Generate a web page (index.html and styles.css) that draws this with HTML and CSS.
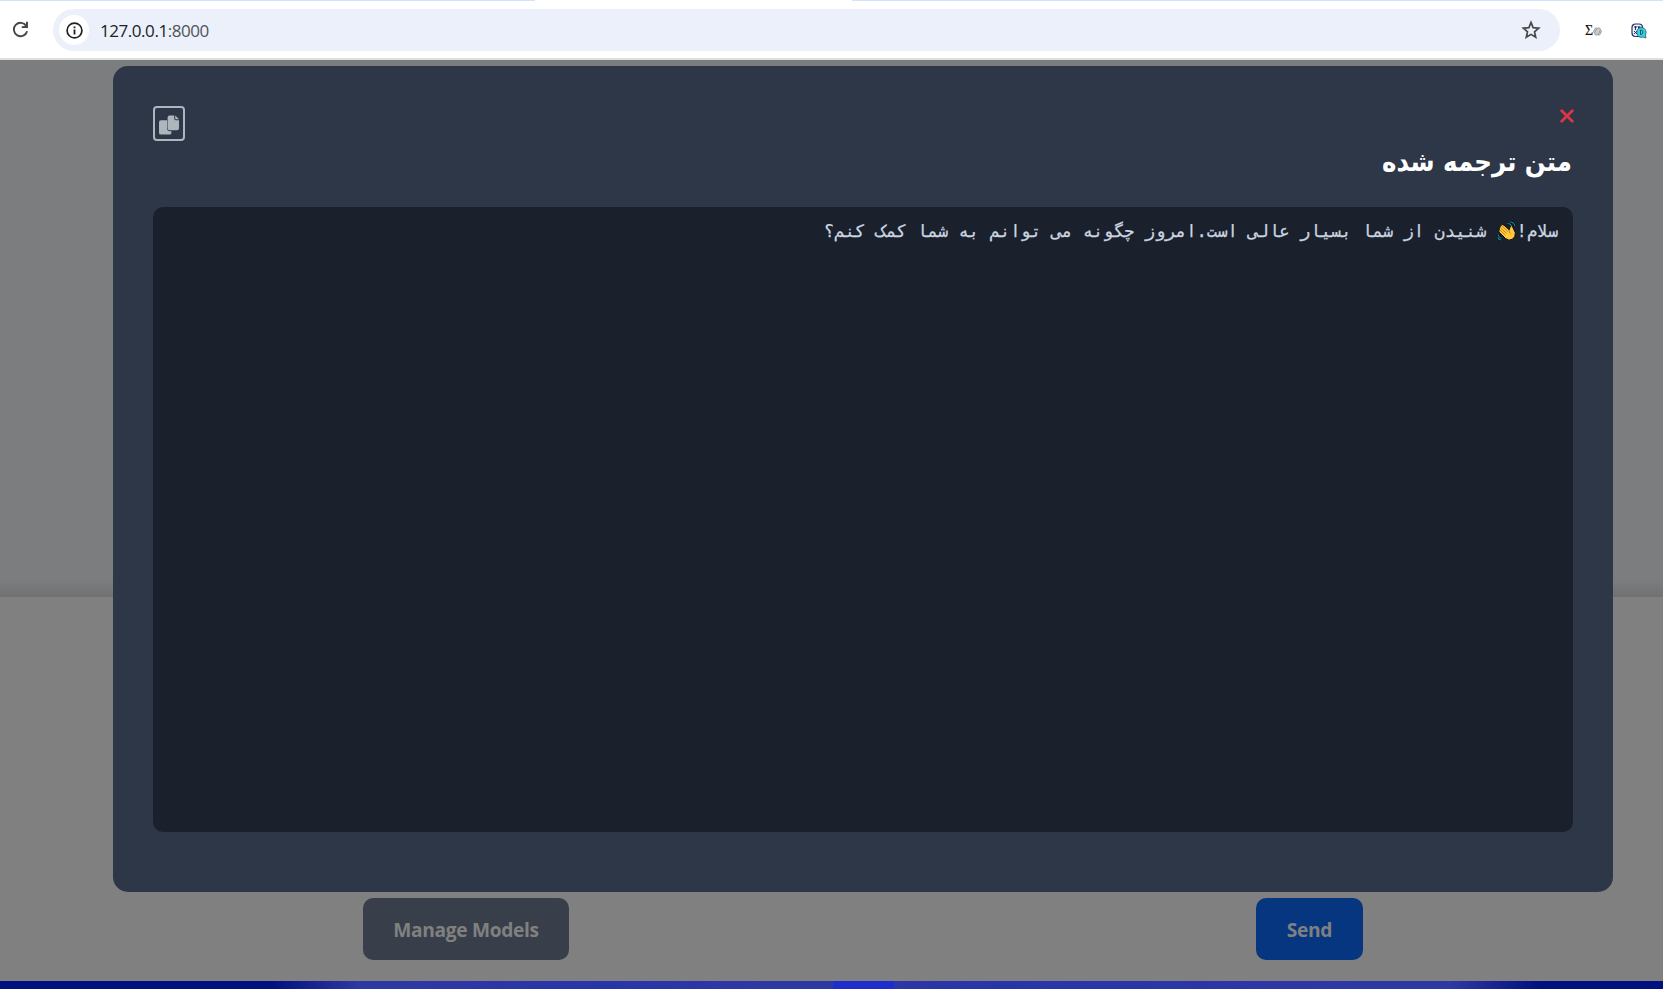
FILE: index.html
```html
<!DOCTYPE html>
<html lang="en">
<head>
<meta charset="utf-8">
<title>Translated text</title>
<link rel="stylesheet" href="styles.css">
</head>
<body>
<header class="toolbar">
  <div class="tab-edge"><span class="active-tab"></span></div>
  <div class="toolbar-row">
    <svg class="reload" viewBox="0 0 16 16"><path d="M13.4 4.6A6.3 6.3 0 1 0 14.2 9.600" fill="none" stroke="#474747" stroke-width="1.800"/><path d="M15 .8V6.600H9.200V5L13 4.600 13.200.8z" fill="#474747"/></svg>
    <div class="address">
      <span class="site-info"><svg viewBox="0 0 17 17"><circle cx="8.500" cy="8.500" r="7.400" fill="none" stroke="#202124" stroke-width="1.700"/><path d="M7.600 4.500h1.800v1.700H7.600zM7.600 7.500h1.800v5H7.600z" fill="#202124"/></svg></span>
      <span class="url">127.0.0.1<span class="port">:8000</span></span>
      <svg class="star" viewBox="0 0 20 20"><path d="M10 2.400l2.100 5.200 5.600.5-4.200 3.700 1.200 5.500L10 14.400l-4.700 2.900 1.200-5.500-4.200-3.700 5.600-.5z" fill="none" stroke="#474747" stroke-width="1.700"/></svg>
    </div>
    <div class="extensions">
      <span class="sigma">Σ<svg viewBox="0 0 8 8"><g fill="#ccc" stroke="#888" stroke-width=".5"><ellipse cx="4" cy="4" rx="3.700" ry="1.800"/><ellipse cx="4" cy="4" rx="3.700" ry="1.800" transform="rotate(60 4 4)"/><ellipse cx="4" cy="4" rx="3.700" ry="1.800" transform="rotate(120 4 4)"/></g></svg></span>
      <svg class="ext" viewBox="0 0 16 16"><rect x="1" y="1" width="10.500" height="12.500" rx="3.500" fill="#eef" stroke="#26315f" stroke-width="1.200"/><path d="M3 4h3M4.500 3v4M7 3l1 3 1-3M3 8l3 3M6 8l-3 3" stroke="#26315f" fill="none"/><path d="M11 4.500a4.500 5 0 0 1 3.500 7.500l.5 3-3-1a4.500 5 0 1 1-1-9.500z" fill="#35d3df" stroke="#174b69" stroke-width=".7"/><path d="M9.500 7v4.500c3 .5 3-5 0-4.500" stroke="#174b69" fill="none"/></svg>
    </div>
  </div>
</header>
<main class="page">
  <section class="chat"></section>
  <section class="composer">
    <button class="btn manage">Manage Models</button>
    <button class="btn send">Send</button>
  </section>
  <div class="modal" dir="rtl" lang="fa">
    <div class="modal-head">
      <div class="heading">
        <svg class="close" viewBox="0 0 14 14"><path d="M1.700 1.700l10.600 10.600M12.300 1.700L1.700 12.300" stroke="#dc3545" stroke-width="2.800" stroke-linecap="round"/></svg>
        <h2 class="title">متن ترجمه شده</h2>
      </div>
      <button class="copy"><svg viewBox="0 0 22 22"><path d="M2 5.500h6.500V14a3 3 0 0 0 3 3h1.500v1.500a2 2 0 0 1-2 2H2a2 2 0 0 1-2-2v-11a2 2 0 0 1 2-2z"/><path d="M11 .5h5V4a1.500 1.500 0 0 0 1.500 1.500H21V14a2 2 0 0 1-2 2h-8a2 2 0 0 1-2-2V2.500a2 2 0 0 1 2-2zM17 .5L21 4.500H17z"/></svg></button>
    </div>
    <div class="output">سلام!<svg class="wave" viewBox="0 0 20 20"><path d="M8.500 17.500L2.200 11.200Q1 9.600 2.500 9 1.300 7.300 3 6.700 2.400 4.700 4.300 4.600 5 2.700 7 4.200L12.200 8.800 13.300 5.200Q15 3.500 15.700 6L18.300 11.500Q19 15.500 15.500 18.200 12 20.500 8.500 17.500z" fill="#ffc83d" stroke="#080b0e" stroke-width="1"/><path d="M2.800 9l5.400 5M3.400 6.800l6.100 5.500M4.600 4.800l6.500 5.800M12.200 8.800q-.2 2.500 1.300 4" fill="none" stroke="#a96b12" stroke-width=".7"/><path d="M10.500 2.500q3 0 4 2.500M12.500 1q4-.5 5.500 4M1 13.500q.5 3 3.500 3.500M.6 16.500q1 2.300 3.500 2.500" fill="none" stroke="#050a0f" stroke-width="2.400"/><path d="M10.500 2.500q3 0 4 2.500M12.500 1q4-.5 5.500 4M1 13.500q.5 3 3.500 3.500M.6 16.500q1 2.300 3.500 2.500" fill="none" stroke="#168fa3" stroke-width="1.100"/></svg> شنیدن از شما بسیار عالی است.امروز چگونه می توانم به شما کمک کنم؟</div>
  </div>
</main>
<footer class="taskbar"><span class="task-active"></span></footer>
</body>
</html>
```
FILE: styles.css
```css
* { box-sizing: border-box; }
body { margin: 0; width: 1663px; height: 989px; overflow: hidden; display: flex; flex-direction: column; font-family: "Open Sans", "Noto Sans", sans-serif; background: #808080; }
svg { display: block; flex: none; }
.toolbar { height: 60px; background: #fff; border-bottom: 2px solid #dfdfdd; }
.tab-edge { height: 1px; background: #d3e3fd; padding-left: 535px; }
.active-tab { display: block; width: 317px; height: 1px; background: #fff; }
.toolbar-row { display: flex; align-items: center; height: 57px; padding: 1px 15px 0 12px; }
.reload { width: 17px; height: 17px; margin: -2px 24px 0 0; }
.address { display: flex; align-items: center; width: 1507px; height: 42px; border-radius: 21px; background: #ebf0fa; padding: 0 19px 0 6px; }
.site-info { display: grid; place-items: center; width: 30px; height: 30px; border-radius: 50%; background: #fff; }
.site-info svg { width: 17px; height: 17px; }
.url { margin-left: 11px; flex: 1; font-size: 17px; letter-spacing: -.45px; color: #202124; }
.port { color: #505357; }
.star { width: 20px; height: 20px; }
.extensions { display: flex; align-items: center; justify-content: space-between; width: 62px; margin-left: 25px; }
.sigma { display: flex; align-items: center; font: 14px/16px "Liberation Serif", serif; color: #111; -webkit-text-stroke: .2px #111; padding-top: 2px; }
.sigma svg { width: 9px; height: 9px; }
.ext { width: 16px; height: 16px; margin-top: 2px; }
.page { position: relative; height: 921px; display: flex; flex-direction: column; }
.chat { height: 537px; background: linear-gradient(#7c7d7e 0 520px, #707172 537px); }
.composer { flex: 1; display: flex; align-items: flex-end; justify-content: space-between; padding: 0 300px 21px 363px; background: #808080; }
.btn { height: 62px; border: 0; border-radius: 10px; font: 700 19.2px/26px "Open Sans", sans-serif; letter-spacing: -.35px; color: #808080; padding: 2px 0 0; }
.manage { width: 206px; background: #383f4a; }
.send { width: 107px; background: #05367f; }
.modal { position: absolute; left: 113px; top: 6px; width: 1500px; height: 826px; padding: 40px; border-radius: 15px; background: #2d3748; }
.modal-head { display: flex; justify-content: space-between; height: 101px; }
.close { width: 14px; height: 14px; margin: 3px -1px 0 0; }
.title { margin: 16px 1px 0 0; color: #fff; font: 700 27.2px/46px "DejaVu Sans Condensed", "DejaVu Sans", sans-serif; font-stretch: condensed; white-space: nowrap; }
.copy { display: flex; justify-content: center; width: 32px; height: 35px; border: 2px solid #adb5bd; border-radius: 4px; background: none; padding: 7px 0 0 1px; }
.copy svg { width: 21px; height: 21px; fill: #adb5bd; }
.output { height: 625px; padding: 9px 15px; border-radius: 10px; background: #1a202c; color: #cbd5e0; font: 17.2px/30px "DejaVu Sans Mono", monospace; -webkit-text-stroke: .25px #cbd5e0; white-space: nowrap; }
.wave { display: inline-block; width: 20px; height: 20px; vertical-align: -4px; }
.taskbar { height: 8px; padding-left: 833px; background: linear-gradient(90deg, #00107f 0 270px, #3038a5 360px, #2835a8 610px, #3038a5 800px, #2835a8 1000px, #3038a5 1450px, #00107f 1540px); }
.task-active { display: block; width: 61px; height: 8px; background: #202dcd; }
```
